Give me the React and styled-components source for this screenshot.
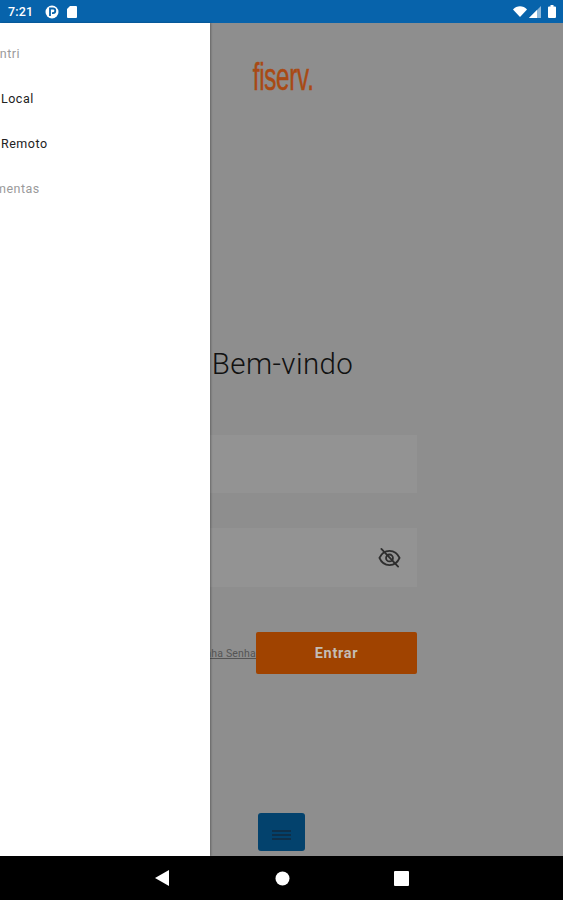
import React from "react";
import styled, { createGlobalStyle } from "styled-components";

const Global = createGlobalStyle`
  html, body { margin: 0; padding: 0; height: 100%; background: #000; }
  #root { height: 100%; }
  * { box-sizing: border-box; }
`;

const Screen = styled.div`
  position: relative;
  width: 563px;
  height: 900px;
  display: flex;
  flex-direction: column;
  overflow: hidden;
  font-family: Roboto, "Liberation Sans", sans-serif;
`;

const StatusBar = styled.header`
  height: 23px;
  flex: none;
  background: #0763ab;
  color: #fff;
  display: flex;
  align-items: center;
  justify-content: space-between;
  padding: 0 7px 0 8px;
`;

const StatusGroup = styled.div`
  display: flex;
  align-items: center;
  gap: ${(p) => p.$gap}px;
`;

const Time = styled.span`
  font-size: 12.5px;
  font-weight: 500;
  letter-spacing: 0.2px;
  width: 26px;
  margin-right: 3px;
`;

const Main = styled.main`
  flex: 1;
  min-height: 0;
  background: #8e8e8e;
  display: flex;
  flex-direction: column;
  align-items: center;
`;

const Logo = styled.div`
  margin: 32px 0 0 4px;
  height: 44px;
  width: 62px;
  display: flex;
  justify-content: center;
  align-items: center;
  color: #a94a14;
  font-family: "Liberation Sans", sans-serif;
  font-size: 39px;
  letter-spacing: -0.4px;
  white-space: nowrap;
  -webkit-text-stroke: 0.5px #a94a14;
  span { display: block; transform: scaleX(0.62); }
`;

const Title = styled.h1`
  margin: 245px 0 0 2px;
  height: 40px;
  font-size: 29.5px;
  line-height: 40px;
  font-weight: 300;
  color: #111;
  letter-spacing: 0.4px;
  white-space: nowrap;
`;

const Form = styled.div`
  width: 271px;
  margin-top: 51px;
  display: flex;
  flex-direction: column;
`;

const Field = styled.div`
  height: ${(p) => p.$h}px;
  margin-bottom: ${(p) => p.$mb}px;
  background: #939393;
  display: flex;
  align-items: center;
  justify-content: flex-end;
  padding-right: 16px;
`;

const Actions = styled.div`
  display: flex;
  align-items: center;
  justify-content: flex-end;
`;

const ForgotLink = styled.a`
  font-size: 10.5px;
  line-height: 13px;
  color: #555;
  text-decoration: underline;
  white-space: nowrap;
  letter-spacing: 0.2px;
`;

const Submit = styled.button`
  width: 161px;
  height: 42px;
  border: 0;
  border-radius: 2px;
  background: #a04300;
  color: #c4bdb6;
  font-family: Roboto, sans-serif;
  font-weight: 700;
  font-size: 14.5px;
  letter-spacing: 0.7px;
`;

const MenuButton = styled.button`
  margin-top: auto;
  margin-bottom: 5px;
  width: 47px;
  height: 38px;
  border: 0;
  border-radius: 3px;
  background: #03426d;
  display: flex;
  flex-direction: column;
  align-items: center;
  justify-content: center;
  gap: 2px;
  padding: 6px 0 0;
`;

const MenuBar = styled.span`
  width: 19px;
  height: 2px;
  background: #0e2f49;
`;

const Drawer = styled.aside`
  position: absolute;
  top: 23px;
  left: 0;
  bottom: 44px;
  width: 210px;
  background: #fff;
  box-shadow: 1px 0 2px rgba(0, 0, 0, 0.3);
  overflow: hidden;
  padding-top: 8px;
  display: flex;
  flex-direction: column;
`;

const DrawerItem = styled.div`
  height: 45px;
  display: flex;
  align-items: center;
  margin-left: ${(p) => p.$shift}px;
  font-size: 12.5px;
  letter-spacing: 0.5px;
  white-space: nowrap;
  color: ${(p) => (p.$muted ? "#9a9a9a" : "#222")};
  font-weight: 400;
`;

const NavBar = styled.nav`
  height: 44px;
  flex: none;
  background: #000;
  display: flex;
  align-items: center;
  padding: 0 154px 0 155px;
  justify-content: space-between;
`;

const Eye = () => (
  <svg width="23" height="23" viewBox="0 0 24 24" fill="none" stroke="#2e2e2e" strokeWidth="1.9" strokeLinecap="round">
    <path d="M1.500 12.500C3.500 7.800 7.300 5 12 5s8.500 2.800 10.500 7.500C20.500 17.200 16.700 20 12 20S3.500 17.200 1.500 12.500z" />
    <circle cx="12" cy="12.500" r="3.600" />
    <path d="M3.500 3 21 21.500" />
  </svg>
);

export default function App() {
  return (
    <>
      <Global />
      <Screen>
        <StatusBar>
          <StatusGroup $gap={8}>
            <Time>7:21</Time>
            <svg width="14" height="14" viewBox="0 0 14 14">
              <circle cx="7" cy="7" r="6.500" fill="#fff" />
              <path d="M5 11V3.500h3a2.300 2.300 0 0 1 0 4.600H7" fill="none" stroke="#0763ab" strokeWidth="1.800" />
            </svg>
            <svg width="10" height="12" viewBox="0 0 10 12">
              <path d="M3 0h6a1 1 0 0 1 1 1v10a1 1 0 0 1-1 1H1a1 1 0 0 1-1-1V3z" fill="#fff" />
            </svg>
          </StatusGroup>
          <StatusGroup $gap={2}>
            <svg width="14" height="11" viewBox="0 0 14 11">
              <path d="M0 3.500C3.800-.8 10.200-.8 14 3.500L7 11z" fill="#fff" />
            </svg>
            <svg width="12" height="12" viewBox="0 0 12 12">
              <path d="M12 0v12H0z" fill="#fff" opacity="0.55" />
              <path d="M8 4v8H0z" fill="#fff" />
            </svg>
            <svg width="8" height="13" viewBox="0 0 8 13" style={{ marginLeft: 5 }}>
              <path d="M2.500 0h3v1.500H7a1 1 0 0 1 1 1V12a1 1 0 0 1-1 1H1a1 1 0 0 1-1-1V2.500a1 1 0 0 1 1-1h1.500z" fill="#fff" />
            </svg>
          </StatusGroup>
        </StatusBar>
        <Main>
          <Logo><span>fiserv.</span></Logo>
          <Title>Bem-vindo</Title>
          <Form>
            <Field $h={58} $mb={35} />
            <Field $h={59} $mb={45}><Eye /></Field>
            <Actions>
              <ForgotLink>Esqueci Minha Senha</ForgotLink>
              <Submit>Entrar</Submit>
            </Actions>
          </Form>
          <MenuButton>
            <MenuBar />
            <MenuBar />
            <MenuBar />
          </MenuButton>
        </Main>
        <NavBar>
          <svg width="15" height="16" viewBox="0 0 15 16"><path d="M14 0v16L0 8z" fill="#fff" /></svg>
          <svg width="15" height="15" viewBox="0 0 15 15"><circle cx="7.500" cy="7.500" r="7" fill="#fff" /></svg>
          <svg width="15" height="15" viewBox="0 0 15 15"><rect width="15" height="15" rx="1" fill="#fff" /></svg>
        </NavBar>
        <Drawer>
          <DrawerItem $muted $shift={-16}>Centri</DrawerItem>
          <DrawerItem $shift={1}>Local</DrawerItem>
          <DrawerItem $shift={1}>Remoto</DrawerItem>
          <DrawerItem $muted $shift={-36}>Ferramentas</DrawerItem>
        </Drawer>
      </Screen>
    </>
  );
}
